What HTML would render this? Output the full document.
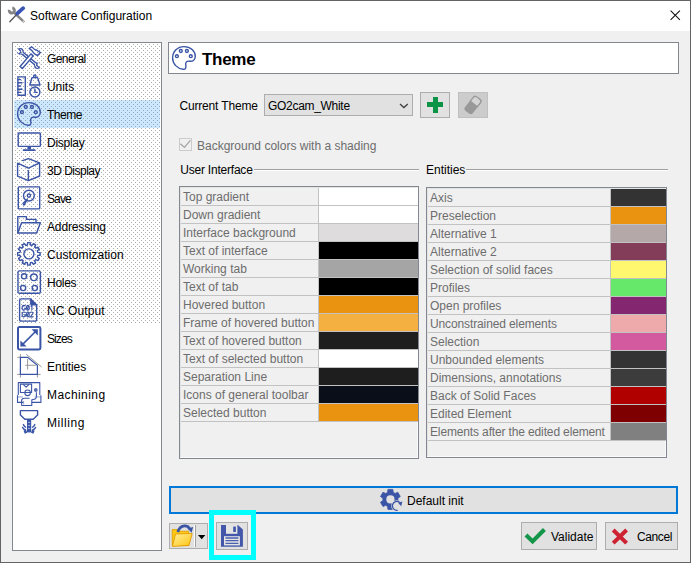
<!DOCTYPE html>
<html><head><meta charset="utf-8">
<style>
*{box-sizing:border-box;margin:0;padding:0}
html,body{width:691px;height:563px;overflow:hidden;background:#f0f0f0}
body{position:relative;font-family:"Liberation Sans",sans-serif;font-size:12px;color:#000}
.a{position:absolute}
.t{position:absolute;white-space:nowrap;line-height:14px;font-size:12px}
.btn{position:absolute;border:1px solid #adadad;background:#e1e1e1}
svg{overflow:visible}
</style></head>
<body>
<div class="a" style="left:0;top:0;width:691px;height:563px;border:1px solid #646464"></div>
<div class="a" style="left:1px;top:1px;width:689px;height:30px;background:#fff"></div>
<svg class="a" style="left:0px;top:0px;" width="32" height="32" viewBox="0 0 32 32">
<path d="M12.3 7.9 A2.6 2.6 0 1 1 9.3 9.9" stroke="#858585" stroke-width="2.9" fill="none"/>
<path d="M13.8 12.4 L23.4 21.4" stroke="#858585" stroke-width="2.6" stroke-linecap="round"/>
<circle cx="23.2" cy="21.2" r="0.7" fill="#fff"/>
<path d="M16.4 14.8 L9.8 21.8" stroke="#555" stroke-width="1.3" stroke-linecap="round"/>
<path d="M17.4 13.4 L23.2 8.2" stroke="#3b55b5" stroke-width="3.8" stroke-linecap="round"/>
</svg>
<div class="t" style="left:30px;top:9px;color:#000;font-size:12px;line-height:14px;font-weight:normal;">Software Configuration</div>
<svg class="a" style="left:670px;top:10px;" width="11" height="11" viewBox="0 0 11 11"><path d="M0.6 0.6 L9.9 9.9 M9.9 0.6 L0.6 9.9" stroke="#111" stroke-width="1.05"/></svg>
<div class="a" style="left:12px;top:42px;width:150px;height:509px;border:1px solid #828790;background:#fff"></div>
<div class="a" style="left:14px;top:100px;width:146px;height:28px;background:#cce8ff"></div>
<svg class="a" style="left:0;top:0" width="691" height="563"><defs>
<pattern id="dw" patternUnits="userSpaceOnUse" width="4" height="4" x="0" y="0">
<rect x="1" y="0" width="1" height="1" fill="#adadad"/><rect x="3" y="2" width="1" height="1" fill="#adadad"/></pattern>
<pattern id="db" patternUnits="userSpaceOnUse" width="4" height="4" x="0" y="0">
<rect x="1" y="0" width="1" height="1" fill="#98a8b8"/><rect x="3" y="2" width="1" height="1" fill="#98a8b8"/></pattern>
</defs>
<rect x="14" y="44" width="146" height="56" fill="url(#dw)" shape-rendering="crispEdges"/>
<rect x="14" y="100" width="146" height="28" fill="url(#db)" shape-rendering="crispEdges"/>
<rect x="14" y="128" width="146" height="195" fill="url(#dw)" shape-rendering="crispEdges"/>
</svg>
<svg class="a" style="left:17px;top:46px;" width="24" height="24" viewBox="0 0 24 24">
<defs>
<filter id="ol" x="-20%" y="-20%" width="140%" height="140%"><feMorphology in="SourceAlpha" operator="erode" radius="1.25" result="e"/><feComposite in="SourceGraphic" in2="e" operator="out"/></filter>
<mask id="wm" maskUnits="userSpaceOnUse" x="-2" y="-2" width="28" height="28"><rect x="-2" y="-2" width="28" height="28" fill="#fff"/>
<path d="M-1 1.2 L3.4 5.4 L1.6 7.4 L-2.6 3 Z" fill="#000"/>
<path d="M25 23.4 L19.8 18.4 L21.8 16.6 L26.6 21.4 Z" fill="#000"/>
</mask>
</defs>
<g filter="url(#ol)"><g mask="url(#wm)" fill="#3b55a6">
<path d="M3.6 5.6 L20.2 19.4" stroke="#3b55a6" stroke-width="3.6"/>
<circle cx="3.2" cy="5.2" r="3.3"/>
<circle cx="20.4" cy="19.8" r="3.3"/>
</g></g>
<path d="M3.1 20.5 L13.9 7.9 L16.2 9.9 L5.4 22.5 Z" fill="#fff" stroke="#3b55a6" fill="none" stroke-width="1.4" stroke-linejoin="round" stroke-linecap="round" stroke-width="1.3"/>
<path d="M12.2 2.6 L14.6 0.8 Q16 1.4 16.6 2.6 Q17.6 3.8 19.4 4 L23.4 6.6 L20.6 9.6 L17.6 7.8 Q16 6.6 15.6 5.4 Q14.6 3.8 12.2 2.6 Z" stroke="#3b55a6" fill="none" stroke-width="1.4" stroke-linejoin="round" stroke-linecap="round" stroke-width="1.3"/>
</svg>
<div class="t" style="left:47px;top:52px;color:#000;font-size:12px;line-height:14px;font-weight:normal;letter-spacing:-0.57px">General</div>
<svg class="a" style="left:17px;top:74px;" width="24" height="24" viewBox="0 0 24 24">
<rect x="0.9" y="2.9" width="7.4" height="18.4" stroke="#3b55a6" fill="none" stroke-width="1.4" stroke-linejoin="round" stroke-linecap="round"/>
<path d="M1 5.6 H3.6 M1 8.8 H5 M1 12 H3.6 M1 15.2 H5 M1 18.4 H3.6" stroke="#3b55a6" fill="none" stroke-width="1.4" stroke-linejoin="round" stroke-linecap="round"/>
<circle cx="17.8" cy="2.2" r="1.2" stroke="#3b55a6" fill="none" stroke-width="1.4" stroke-linejoin="round" stroke-linecap="round"/>
<path d="M15 3.6 H20.6 L23 11 H12.8 Z" stroke="#3b55a6" fill="none" stroke-width="1.4" stroke-linejoin="round" stroke-linecap="round"/>
<circle cx="17.9" cy="18" r="5" stroke="#3b55a6" fill="none" stroke-width="1.4" stroke-linejoin="round" stroke-linecap="round"/>
<path d="M17.9 15 V18.4 H20" stroke="#3b55a6" fill="none" stroke-width="1.4" stroke-linejoin="round" stroke-linecap="round"/>
</svg>
<div class="t" style="left:47px;top:80px;color:#000;font-size:12px;line-height:14px;font-weight:normal;letter-spacing:-0.05px">Units</div>
<svg class="a" style="left:17px;top:102px;" width="24" height="24" viewBox="0 0 24 24">
<path d="M12 0.6 C18.6 0.6 23.4 5 23.3 10.6 C23.2 14.4 20.4 15.6 17.4 15.2 C14.4 14.8 13.2 16.8 13.8 19.4 C14.4 22.4 13.2 23.6 11.2 23.3 C5.2 22.6 0.6 18 0.6 12 C0.6 5.4 5.6 0.6 12 0.6 Z" stroke="#3b55a6" fill="none" stroke-width="1.4" stroke-linejoin="round" stroke-linecap="round" stroke-width="1.25"/>
<circle cx="8.8" cy="5" r="1.45" stroke="#3b55a6" fill="none" stroke-width="1.4" stroke-linejoin="round" stroke-linecap="round" stroke-width="1.1"/>
<circle cx="14.9" cy="5" r="1.45" stroke="#3b55a6" fill="none" stroke-width="1.4" stroke-linejoin="round" stroke-linecap="round" stroke-width="1.1"/>
<circle cx="4.9" cy="10.2" r="1.45" stroke="#3b55a6" fill="none" stroke-width="1.4" stroke-linejoin="round" stroke-linecap="round" stroke-width="1.1"/>
<circle cx="18.8" cy="10.2" r="1.45" stroke="#3b55a6" fill="none" stroke-width="1.4" stroke-linejoin="round" stroke-linecap="round" stroke-width="1.1"/>
</svg>
<div class="t" style="left:47px;top:108px;color:#000;font-size:12px;line-height:14px;font-weight:normal;letter-spacing:-0.47px">Theme</div>
<svg class="a" style="left:17px;top:130px;" width="24" height="24" viewBox="0 0 24 24">
<rect x="1.2" y="3" width="22.2" height="13.4" rx="0.8" stroke="#3b55a6" fill="none" stroke-width="1.4" stroke-linejoin="round" stroke-linecap="round" stroke-width="1.7"/>
<rect x="10.4" y="16.4" width="3.6" height="3" fill="#3b55a6"/>
<path d="M6.6 20.2 H17.6" stroke="#3b55a6" stroke-width="1.8" stroke-linecap="round"/>
</svg>
<div class="t" style="left:47px;top:136px;color:#000;font-size:12px;line-height:14px;font-weight:normal;letter-spacing:-0.27px">Display</div>
<svg class="a" style="left:17px;top:158px;" width="24" height="24" viewBox="0 0 24 24">
<path d="M5.6 2.6 L11.4 0.6 L22.6 4.9 L11.4 10.2 L0.6 5.2 V18.2 L11.4 22.6 L22.6 18 V4.9" stroke="#3b55a6" fill="none" stroke-width="1.4" stroke-linejoin="round" stroke-linecap="round" stroke-width="1.6"/>
<path d="M11.4 12.6 V22.4" stroke="#3b55a6" fill="none" stroke-width="1.4" stroke-linejoin="round" stroke-linecap="round" stroke-width="1.6"/>
</svg>
<div class="t" style="left:47px;top:164px;color:#000;font-size:12px;line-height:14px;font-weight:normal;letter-spacing:-0.5px">3D Display</div>
<svg class="a" style="left:17px;top:186px;" width="24" height="24" viewBox="0 0 24 24">
<rect x="1.3" y="0.9" width="21.4" height="22" rx="0.8" stroke="#3b55a6" fill="none" stroke-width="1.4" stroke-linejoin="round" stroke-linecap="round" stroke-width="1.5"/>
<circle cx="11.9" cy="9.6" r="5.4" stroke="#3b55a6" fill="none" stroke-width="1.4" stroke-linejoin="round" stroke-linecap="round"/>
<circle cx="11.9" cy="9.6" r="1.6" stroke="#3b55a6" fill="none" stroke-width="1.4" stroke-linejoin="round" stroke-linecap="round"/>
<path d="M10.2 13.2 L6 17.6 L7 19.2 L9.4 15 Z" stroke="#3b55a6" fill="none" stroke-width="1.4" stroke-linejoin="round" stroke-linecap="round"/>
</svg>
<div class="t" style="left:47px;top:192px;color:#000;font-size:12px;line-height:14px;font-weight:normal;letter-spacing:-0.9px">Save</div>
<svg class="a" style="left:17px;top:214px;" width="24" height="24" viewBox="0 0 24 24">
<path d="M0.8 19 V2.6 H9.4 V5.4 H19 V8.8" stroke="#3b55a6" fill="none" stroke-width="1.4" stroke-linejoin="round" stroke-linecap="round" stroke-width="1.6"/>
<path d="M4.6 8.8 H23.4 L19.6 19 H0.8 Z" stroke="#3b55a6" fill="none" stroke-width="1.4" stroke-linejoin="round" stroke-linecap="round" stroke-width="1.6"/>
</svg>
<div class="t" style="left:47px;top:220px;color:#000;font-size:12px;line-height:14px;font-weight:normal;letter-spacing:-0.13px">Addressing</div>
<svg class="a" style="left:17px;top:242px;" width="24" height="24" viewBox="0 0 24 24">
<path d="M20.77 10.40 L23.13 10.60 L23.13 13.20 L20.77 13.40 L20.34 15.04 L22.27 16.39 L20.97 18.64 L18.83 17.64 L17.64 18.83 L18.64 20.97 L16.39 22.27 L15.04 20.34 L13.40 20.77 L13.20 23.13 L10.60 23.13 L10.40 20.77 L8.76 20.34 L7.41 22.27 L5.16 20.97 L6.16 18.83 L4.97 17.64 L2.83 18.64 L1.53 16.39 L3.46 15.04 L3.03 13.40 L0.67 13.20 L0.67 10.60 L3.03 10.40 L3.46 8.76 L1.53 7.41 L2.83 5.16 L4.97 6.16 L6.16 4.97 L5.16 2.83 L7.41 1.53 L8.76 3.46 L10.40 3.03 L10.60 0.67 L13.20 0.67 L13.40 3.03 L15.04 3.46 L16.39 1.53 L18.64 2.83 L17.64 4.97 L18.83 6.16 L20.97 5.16 L22.27 7.41 L20.34 8.76 Z" stroke="#3b55a6" fill="none" stroke-width="1.4" stroke-linejoin="round" stroke-linecap="round" stroke-width="1.5"/>
<circle cx="11.9" cy="11.9" r="5" stroke="#3b55a6" fill="none" stroke-width="1.4" stroke-linejoin="round" stroke-linecap="round" stroke-width="1.5"/>
</svg>
<div class="t" style="left:47px;top:248px;color:#000;font-size:12px;line-height:14px;font-weight:normal;letter-spacing:0.05px">Customization</div>
<svg class="a" style="left:17px;top:270px;" width="24" height="24" viewBox="0 0 24 24">
<rect x="1" y="0.9" width="22.4" height="22.4" rx="1.6" stroke="#3b55a6" fill="none" stroke-width="1.4" stroke-linejoin="round" stroke-linecap="round" stroke-width="1.6"/>
<circle cx="7.1" cy="6.3" r="2.6" stroke="#3b55a6" fill="none" stroke-width="1.4" stroke-linejoin="round" stroke-linecap="round" stroke-width="1.5"/>
<circle cx="16.9" cy="7.3" r="3.3" stroke="#3b55a6" fill="none" stroke-width="1.4" stroke-linejoin="round" stroke-linecap="round" stroke-width="1.5"/>
<circle cx="6.1" cy="18" r="2.6" stroke="#3b55a6" fill="none" stroke-width="1.4" stroke-linejoin="round" stroke-linecap="round" stroke-width="1.5"/>
<circle cx="17.8" cy="18" r="2.6" stroke="#3b55a6" fill="none" stroke-width="1.4" stroke-linejoin="round" stroke-linecap="round" stroke-width="1.5"/>
</svg>
<div class="t" style="left:47px;top:276px;color:#000;font-size:12px;line-height:14px;font-weight:normal;letter-spacing:-0.28px">Holes</div>
<svg class="a" style="left:17px;top:298px;" width="24" height="24" viewBox="0 0 24 24">
<path d="M13.6 0.9 H4.4 Q2.6 0.9 2.6 2.8 V21.2 Q2.6 23.1 4.4 23.1 H17.8 Q19.7 23.1 19.7 21.2 V7 Z" stroke="#3b55a6" fill="none" stroke-width="1.4" stroke-linejoin="round" stroke-linecap="round"/>
<path d="M13.6 0.9 V6 Q13.6 7 14.6 7 H19.7 Z" fill="#3b55a6" stroke="#3b55a6" stroke-width="1" stroke-linejoin="round"/>
<g stroke="#3b55a6" stroke-width="1.15" fill="none">
<path d="M8.5 8.3 Q8 7.3 6.9 7.3 Q5.1 7.3 5.1 9.7 Q5.1 12.1 6.9 12.1 Q8.5 12.1 8.5 10.2 H7"/>
<ellipse cx="10.9" cy="9.7" rx="1.35" ry="2.3"/><path d="M10 11.4 L11.8 8"/>
<path d="M13.6 8.4 L14.9 7.3 V12.1"/>
<path d="M8.5 15 Q8 14 6.9 14 Q5.1 14 5.1 16.4 Q5.1 18.8 6.9 18.8 Q8.5 18.8 8.5 16.9 H7"/>
<ellipse cx="10.9" cy="16.4" rx="1.35" ry="2.3"/><path d="M10 18.1 L11.8 14.7"/>
<path d="M13.3 15 Q13.6 14 14.7 14 Q16 14 16 15.3 Q16 16.3 13.3 18.8 H16.3"/>
</g>
</svg>
<div class="t" style="left:47px;top:304px;color:#000;font-size:12px;line-height:14px;font-weight:normal;letter-spacing:0.12px">NC Output</div>
<svg class="a" style="left:17px;top:326px;" width="24" height="24" viewBox="0 0 24 24">
<rect x="1" y="1" width="22.4" height="22.4" rx="1.4" stroke="#3b55a6" fill="none" stroke-width="2"/>
<path d="M5.4 18.6 L18.8 5.2" stroke="#3b55a6" stroke-width="1.6"/>
<path d="M3.4 14.4 V20.6 H9.6 Z" fill="#3b55a6"/>
<path d="M20.8 9.4 V3.2 H14.6 Z" fill="#3b55a6"/>
</svg>
<div class="t" style="left:47px;top:332px;color:#000;font-size:12px;line-height:14px;font-weight:normal;letter-spacing:-0.9px">Sizes</div>
<svg class="a" style="left:17px;top:354px;" width="24" height="24" viewBox="0 0 24 24">
<path d="M0.2 3.3 H3.4 M3.4 0.1 V3.3 M0.2 20.4 H3.4 M3.4 20.4 V23.6 M20.4 20.4 H23.6 M20.4 20.4 V23.6 M9.2 0.2 L24.6 13 M10.6 5 V15.6 M8.2 11.3 H18.8" stroke="#9a9a9a" stroke-width="1" fill="none"/>
<path d="M3.4 3.3 H10.6 L20.4 11.2 V20.4 H3.4 Z" stroke="#3b55a6" stroke-width="1.25" fill="none"/>
</svg>
<div class="t" style="left:47px;top:360px;color:#000;font-size:12px;line-height:14px;font-weight:normal;letter-spacing:-0.01px">Entities</div>
<svg class="a" style="left:17px;top:382px;" width="24" height="24" viewBox="0 0 24 24">
<g stroke="#3b55a6" fill="none" stroke-width="1.1" stroke-linejoin="round">
<path d="M1.3 13 V0.6 H22.8 V13"/>
<rect x="3.4" y="2.1" width="11.2" height="8.4"/>
<path d="M6.2 2.3 L9.1 5.1 L12 2.3"/>
<path d="M0.5 13.2 V20.4 H6.4 M14.8 20.4 H23.9 V13.2"/>
<path d="M0.9 14.9 H6 M17.6 14.9 H23.5" stroke-opacity="0.45" stroke-width="1.3"/>
<circle cx="10.6" cy="10.8" r="2.8" fill="#fff"/>
<path d="M7.8 10.5 H13.4"/>
<path d="M4.6 23.5 H14.8 V17.8 L17.4 17.2 Q19.4 16.8 19.4 14.6 V10.2"/>
<path d="M4.6 23.5 V18.8 Q4.6 16.2 7.6 16.2 H12.6"/>
<path d="M6.6 19 V22.6" stroke-opacity="0.45"/>
</g>
<circle cx="18.8" cy="8" r="1.9" fill="#3b55a6" fill-opacity="0.85"/>
</svg>
<div class="t" style="left:47px;top:388px;color:#000;font-size:12px;line-height:14px;font-weight:normal;letter-spacing:0.42px">Machining</div>
<svg class="a" style="left:17px;top:410px;" width="24" height="24" viewBox="0 0 24 24">
<path d="M3.4 0.6 H20.6 V4.9 L16.2 9.2 H7.8 L3.4 4.9 Z" stroke="#3b55a6" fill="none" stroke-width="1.4" stroke-linejoin="round" stroke-linecap="round" stroke-width="1.6"/>
<rect x="10" y="9.2" width="4.2" height="13.2" fill="#3b55a6"/>
<path d="M11 12.4 H13.2 M11 15.4 H13.2 M11 18.4 H13.2" stroke="#c8d0ea" stroke-width="0.8"/>
<path d="M6.4 14.6 Q7.4 16.6 8.6 17.2 M5.6 17.4 Q6.6 19.6 8.4 19.8 Q9 21.4 9.4 22.4 M7.4 21 L8.2 23" stroke="#3b55a6" fill="none" stroke-width="1.4" stroke-linejoin="round" stroke-linecap="round" stroke-width="1.1"/>
<path d="M17.8 14.6 Q16.8 16.6 15.6 17.2 M18.6 17.4 Q17.6 19.6 15.8 19.8 Q15.2 21.4 14.8 22.4 M16.8 21 L16 23" stroke="#3b55a6" fill="none" stroke-width="1.4" stroke-linejoin="round" stroke-linecap="round" stroke-width="1.1"/>
</svg>
<div class="t" style="left:47px;top:416px;color:#000;font-size:12px;line-height:14px;font-weight:normal;letter-spacing:0.58px">Milling</div>
<div class="a" style="left:168px;top:42px;width:511px;height:32px;border:1px solid #828790;background:#fff"></div>
<svg class="a" style="left:172px;top:46px;" width="24" height="24" viewBox="0 0 24 24">
<path d="M12 0.6 C18.6 0.6 23.4 5 23.3 10.6 C23.2 14.4 20.4 15.6 17.4 15.2 C14.4 14.8 13.2 16.8 13.8 19.4 C14.4 22.4 13.2 23.6 11.2 23.3 C5.2 22.6 0.6 18 0.6 12 C0.6 5.4 5.6 0.6 12 0.6 Z" stroke="#3b55a6" fill="none" stroke-width="1.4" stroke-linejoin="round" stroke-linecap="round" stroke-width="1.25"/>
<circle cx="8.8" cy="5" r="1.45" stroke="#3b55a6" fill="none" stroke-width="1.4" stroke-linejoin="round" stroke-linecap="round" stroke-width="1.1"/>
<circle cx="14.9" cy="5" r="1.45" stroke="#3b55a6" fill="none" stroke-width="1.4" stroke-linejoin="round" stroke-linecap="round" stroke-width="1.1"/>
<circle cx="4.9" cy="10.2" r="1.45" stroke="#3b55a6" fill="none" stroke-width="1.4" stroke-linejoin="round" stroke-linecap="round" stroke-width="1.1"/>
<circle cx="18.8" cy="10.2" r="1.45" stroke="#3b55a6" fill="none" stroke-width="1.4" stroke-linejoin="round" stroke-linecap="round" stroke-width="1.1"/>
</svg>
<div class="t" style="left:202px;top:50px;color:#000;font-size:17px;line-height:20px;font-weight:bold;letter-spacing:-0.3px">Theme</div>
<div class="t" style="left:179.4px;top:99px;color:#000;font-size:12px;line-height:14px;font-weight:normal;letter-spacing:-0.16px">Current Theme</div>
<div class="a" style="left:264px;top:94px;width:149px;height:22px;border:1px solid #adadad;background:#e1e1e1"></div>
<div class="t" style="left:268px;top:99px;color:#000;font-size:12px;line-height:14px;font-weight:normal;letter-spacing:-0.3px">GO2cam_White</div>
<svg class="a" style="left:399px;top:103px;" width="10" height="6" viewBox="0 0 10 6"><path d="M1 1 L4.9 4.6 L8.8 1" stroke="#404040" stroke-width="1.3" fill="none"/></svg>
<div class="btn" style="left:420px;top:92px;width:30px;height:26px"></div>
<div class="a" style="left:433px;top:97px;width:5px;height:16px;background:#0b9346"></div>
<div class="a" style="left:427px;top:102px;width:16px;height:5px;background:#0b9346"></div>
<div class="btn" style="left:458px;top:92px;width:30px;height:26px;background:#cccccc;border-color:#c0c0c0"></div>
<svg class="a" style="left:458px;top:92px;" width="30" height="26" viewBox="0 0 30 26">
<g transform="rotate(38 15 13)">
<rect x="10" y="3.8" width="10" height="18.4" rx="2.8" fill="#999" />
<path d="M10.6 11.6 V6.6 Q10.6 4.4 12.8 4.4 H17.2 Q19.4 4.4 19.4 6.6 V11.6 Z" fill="#d4d4d4" stroke="#999" stroke-width="1.2"/>
</g></svg>
<div class="a" style="left:179px;top:138px;width:13px;height:13px;border:1px solid #cccccc"></div>
<svg class="a" style="left:179px;top:138px;" width="13" height="13" viewBox="0 0 13 13"><path d="M1.4 5.8 L5.4 9.4 L11.4 2.4" stroke="#a4a4a4" stroke-width="1.3" fill="none"/></svg>
<div class="t" style="left:197px;top:139px;color:#6d6d6d;font-size:12px;line-height:14px;font-weight:normal;">Background colors with a shading</div>
<div class="t" style="left:180.3px;top:163px;color:#000;font-size:12px;line-height:14px;font-weight:normal;letter-spacing:-0.22px">User Interface</div>
<div class="a" style="left:254px;top:169px;width:165px;height:1px;background:#a0a0a0"></div>
<div class="a" style="left:254px;top:170px;width:165px;height:1px;background:#fff"></div>
<div class="t" style="left:426px;top:163px;color:#000;font-size:12px;line-height:14px;font-weight:normal;">Entities</div>
<div class="a" style="left:466px;top:169px;width:202px;height:1px;background:#a0a0a0"></div>
<div class="a" style="left:466px;top:170px;width:202px;height:1px;background:#fff"></div>
<div class="a" style="left:179px;top:186px;width:240px;height:273px;border:1px solid #828790;background:#f0f0f0"></div>
<div class="a" style="left:180px;top:187px;width:238px;height:1px;background:#e3e3e3"></div>
<div class="a" style="left:180px;top:187px;width:1px;height:271px;background:#e3e3e3"></div>
<div class="a" style="left:180px;top:457px;width:238px;height:1px;background:#fafafa"></div>
<div class="a" style="left:417px;top:187px;width:1px;height:271px;background:#fafafa"></div>
<div class="a" style="left:319px;top:188px;width:99px;height:17px;background:#ffffff"></div>
<div class="a" style="left:181px;top:205px;width:237px;height:1px;background:#c2c2c2"></div>
<div class="t" style="left:183px;top:190px;color:#6d6d6d;font-size:12px;line-height:14px;font-weight:normal;">Top gradient</div>
<div class="a" style="left:319px;top:206px;width:99px;height:17px;background:#ffffff"></div>
<div class="a" style="left:181px;top:223px;width:237px;height:1px;background:#c2c2c2"></div>
<div class="t" style="left:183px;top:208px;color:#6d6d6d;font-size:12px;line-height:14px;font-weight:normal;">Down gradient</div>
<div class="a" style="left:319px;top:224px;width:99px;height:17px;background:#dedcdd"></div>
<div class="a" style="left:181px;top:241px;width:237px;height:1px;background:#c2c2c2"></div>
<div class="t" style="left:183px;top:226px;color:#6d6d6d;font-size:12px;line-height:14px;font-weight:normal;">Interface background</div>
<div class="a" style="left:319px;top:242px;width:99px;height:17px;background:#000000"></div>
<div class="a" style="left:181px;top:259px;width:237px;height:1px;background:#c2c2c2"></div>
<div class="t" style="left:183px;top:244px;color:#6d6d6d;font-size:12px;line-height:14px;font-weight:normal;">Text of interface</div>
<div class="a" style="left:319px;top:260px;width:99px;height:17px;background:#a5a5a5"></div>
<div class="a" style="left:181px;top:277px;width:237px;height:1px;background:#c2c2c2"></div>
<div class="t" style="left:183px;top:262px;color:#6d6d6d;font-size:12px;line-height:14px;font-weight:normal;">Working tab</div>
<div class="a" style="left:319px;top:278px;width:99px;height:17px;background:#000000"></div>
<div class="a" style="left:181px;top:295px;width:237px;height:1px;background:#c2c2c2"></div>
<div class="t" style="left:183px;top:280px;color:#6d6d6d;font-size:12px;line-height:14px;font-weight:normal;">Text of tab</div>
<div class="a" style="left:319px;top:296px;width:99px;height:17px;background:#ea9310"></div>
<div class="a" style="left:181px;top:313px;width:237px;height:1px;background:#c2c2c2"></div>
<div class="t" style="left:183px;top:298px;color:#6d6d6d;font-size:12px;line-height:14px;font-weight:normal;">Hovered button</div>
<div class="a" style="left:319px;top:314px;width:99px;height:17px;background:#f4b040"></div>
<div class="a" style="left:181px;top:331px;width:237px;height:1px;background:#c2c2c2"></div>
<div class="t" style="left:183px;top:316px;color:#6d6d6d;font-size:12px;line-height:14px;font-weight:normal;">Frame of hovered button</div>
<div class="a" style="left:319px;top:332px;width:99px;height:17px;background:#1e1e1e"></div>
<div class="a" style="left:181px;top:349px;width:237px;height:1px;background:#c2c2c2"></div>
<div class="t" style="left:183px;top:334px;color:#6d6d6d;font-size:12px;line-height:14px;font-weight:normal;">Text of hovered button</div>
<div class="a" style="left:319px;top:350px;width:99px;height:17px;background:#ffffff"></div>
<div class="a" style="left:181px;top:367px;width:237px;height:1px;background:#c2c2c2"></div>
<div class="t" style="left:183px;top:352px;color:#6d6d6d;font-size:12px;line-height:14px;font-weight:normal;">Text of selected button</div>
<div class="a" style="left:319px;top:368px;width:99px;height:17px;background:#1e1e1e"></div>
<div class="a" style="left:181px;top:385px;width:237px;height:1px;background:#c2c2c2"></div>
<div class="t" style="left:183px;top:370px;color:#6d6d6d;font-size:12px;line-height:14px;font-weight:normal;">Separation Line</div>
<div class="a" style="left:319px;top:386px;width:99px;height:17px;background:#0a0e18"></div>
<div class="a" style="left:181px;top:403px;width:237px;height:1px;background:#c2c2c2"></div>
<div class="t" style="left:183px;top:388px;color:#6d6d6d;font-size:12px;line-height:14px;font-weight:normal;">Icons of general toolbar</div>
<div class="a" style="left:319px;top:404px;width:99px;height:17px;background:#ea9310"></div>
<div class="a" style="left:181px;top:421px;width:237px;height:1px;background:#c2c2c2"></div>
<div class="t" style="left:183px;top:406px;color:#6d6d6d;font-size:12px;line-height:14px;font-weight:normal;">Selected button</div>
<div class="a" style="left:318px;top:188px;width:1px;height:234px;background:#c2c2c2"></div>
<div class="a" style="left:426px;top:187px;width:241px;height:271px;border:1px solid #828790;background:#f0f0f0"></div>
<div class="a" style="left:427px;top:188px;width:239px;height:1px;background:#e3e3e3"></div>
<div class="a" style="left:427px;top:188px;width:1px;height:269px;background:#e3e3e3"></div>
<div class="a" style="left:427px;top:456px;width:239px;height:1px;background:#fafafa"></div>
<div class="a" style="left:665px;top:188px;width:1px;height:269px;background:#fafafa"></div>
<div class="a" style="left:611px;top:189px;width:55px;height:17px;background:#333333"></div>
<div class="a" style="left:428px;top:206px;width:238px;height:1px;background:#c2c2c2"></div>
<div class="t" style="left:430px;top:191px;color:#6d6d6d;font-size:12px;line-height:14px;font-weight:normal;">Axis</div>
<div class="a" style="left:611px;top:207px;width:55px;height:17px;background:#ea9310"></div>
<div class="a" style="left:428px;top:224px;width:238px;height:1px;background:#c2c2c2"></div>
<div class="t" style="left:430px;top:209px;color:#6d6d6d;font-size:12px;line-height:14px;font-weight:normal;">Preselection</div>
<div class="a" style="left:611px;top:225px;width:55px;height:17px;background:#b4a9a8"></div>
<div class="a" style="left:428px;top:242px;width:238px;height:1px;background:#c2c2c2"></div>
<div class="t" style="left:430px;top:227px;color:#6d6d6d;font-size:12px;line-height:14px;font-weight:normal;">Alternative 1</div>
<div class="a" style="left:611px;top:243px;width:55px;height:17px;background:#833d58"></div>
<div class="a" style="left:428px;top:260px;width:238px;height:1px;background:#c2c2c2"></div>
<div class="t" style="left:430px;top:245px;color:#6d6d6d;font-size:12px;line-height:14px;font-weight:normal;">Alternative 2</div>
<div class="a" style="left:611px;top:261px;width:55px;height:17px;background:#fff86e"></div>
<div class="a" style="left:428px;top:278px;width:238px;height:1px;background:#c2c2c2"></div>
<div class="t" style="left:430px;top:263px;color:#6d6d6d;font-size:12px;line-height:14px;font-weight:normal;">Selection of solid faces</div>
<div class="a" style="left:611px;top:279px;width:55px;height:17px;background:#66e86a"></div>
<div class="a" style="left:428px;top:296px;width:238px;height:1px;background:#c2c2c2"></div>
<div class="t" style="left:430px;top:281px;color:#6d6d6d;font-size:12px;line-height:14px;font-weight:normal;">Profiles</div>
<div class="a" style="left:611px;top:297px;width:55px;height:17px;background:#842670"></div>
<div class="a" style="left:428px;top:314px;width:238px;height:1px;background:#c2c2c2"></div>
<div class="t" style="left:430px;top:299px;color:#6d6d6d;font-size:12px;line-height:14px;font-weight:normal;">Open profiles</div>
<div class="a" style="left:611px;top:315px;width:55px;height:17px;background:#eeaaaa"></div>
<div class="a" style="left:428px;top:332px;width:238px;height:1px;background:#c2c2c2"></div>
<div class="t" style="left:430px;top:317px;color:#6d6d6d;font-size:12px;line-height:14px;font-weight:normal;letter-spacing:-0.12px">Unconstrained elements</div>
<div class="a" style="left:611px;top:333px;width:55px;height:17px;background:#d45aa0"></div>
<div class="a" style="left:428px;top:350px;width:238px;height:1px;background:#c2c2c2"></div>
<div class="t" style="left:430px;top:335px;color:#6d6d6d;font-size:12px;line-height:14px;font-weight:normal;">Selection</div>
<div class="a" style="left:611px;top:351px;width:55px;height:17px;background:#333333"></div>
<div class="a" style="left:428px;top:368px;width:238px;height:1px;background:#c2c2c2"></div>
<div class="t" style="left:430px;top:353px;color:#6d6d6d;font-size:12px;line-height:14px;font-weight:normal;">Unbounded elements</div>
<div class="a" style="left:611px;top:369px;width:55px;height:17px;background:#3c3c3c"></div>
<div class="a" style="left:428px;top:386px;width:238px;height:1px;background:#c2c2c2"></div>
<div class="t" style="left:430px;top:371px;color:#6d6d6d;font-size:12px;line-height:14px;font-weight:normal;">Dimensions, annotations</div>
<div class="a" style="left:611px;top:387px;width:55px;height:17px;background:#b00000"></div>
<div class="a" style="left:428px;top:404px;width:238px;height:1px;background:#c2c2c2"></div>
<div class="t" style="left:430px;top:389px;color:#6d6d6d;font-size:12px;line-height:14px;font-weight:normal;">Back of Solid Faces</div>
<div class="a" style="left:611px;top:405px;width:55px;height:17px;background:#7f0000"></div>
<div class="a" style="left:428px;top:422px;width:238px;height:1px;background:#c2c2c2"></div>
<div class="t" style="left:430px;top:407px;color:#6d6d6d;font-size:12px;line-height:14px;font-weight:normal;">Edited Element</div>
<div class="a" style="left:611px;top:423px;width:55px;height:17px;background:#808080"></div>
<div class="a" style="left:428px;top:440px;width:238px;height:1px;background:#c2c2c2"></div>
<div class="t" style="left:430px;top:425px;color:#6d6d6d;font-size:12px;line-height:14px;font-weight:normal;letter-spacing:-0.14px">Elements after the edited element</div>
<div class="a" style="left:610px;top:189px;width:1px;height:252px;background:#c2c2c2"></div>
<div class="a" style="left:169px;top:486px;width:509px;height:28px;border:2px solid #0078d7;background:#e1e1e1"></div>
<svg class="a" style="left:379px;top:488px;" width="24" height="24" viewBox="0 0 24 24">
<defs><mask id="gm" maskUnits="userSpaceOnUse" x="-2" y="-2" width="28" height="28"><rect x="-2" y="-2" width="28" height="28" fill="#fff"/><circle cx="11.4" cy="11.4" r="4.1" fill="#000"/><circle cx="17.9" cy="17.9" r="5.7" fill="#000"/></mask></defs>
<path d="M8.60 4.33 L8.94 1.40 L13.86 1.40 L14.20 4.33 L16.12 5.44 L18.83 4.27 L21.29 8.53 L18.92 10.29 L18.92 12.51 L21.29 14.27 L18.83 18.53 L16.12 17.36 L14.20 18.47 L13.86 21.40 L8.94 21.40 L8.60 18.47 L6.68 17.36 L3.97 18.53 L1.51 14.27 L3.88 12.51 L3.88 10.29 L1.51 8.53 L3.97 4.27 L6.68 5.44 Z" fill="#3b55a6" stroke="#3b55a6" stroke-width="0.8" stroke-linejoin="round" mask="url(#gm)"/>
<path d="M20.8 14.45 A4.5 4.5 0 1 0 18.68 22.33" stroke="#3b55a6" stroke-width="1.3" fill="none"/>
<path d="M19 14.8 L23.4 13.6 L22.2 18.2 Z" fill="#3b55a6"/>
</svg>
<div class="t" style="left:407px;top:494px;color:#000;font-size:12px;line-height:14px;font-weight:normal;">Default init</div>
<div class="btn" style="left:169px;top:523px;width:39px;height:26px"></div>
<div class="a" style="left:194px;top:525px;width:1px;height:22px;background:#fff"></div>
<div class="a" style="left:195px;top:525px;width:1px;height:22px;background:#a0a0a0"></div>
<svg class="a" style="left:198px;top:535px;" width="8" height="5" viewBox="0 0 8 5"><path d="M0 0 H7.4 L3.7 4.2 Z" fill="#000"/></svg>
<svg class="a" style="left:171px;top:524px;" width="24" height="24" viewBox="0 0 24 24">
<defs><linearGradient id="fy" x1="0" y1="0" x2="1" y2="1"><stop offset="0" stop-color="#fff2a0"/><stop offset="1" stop-color="#ffc20e"/></linearGradient></defs>
<path d="M1.2 5.6 H6.4 L7.8 7.2 H17.6 V21.6 H1.2 Z" fill="#ffc814" stroke="#e0a000" stroke-width="0.9"/>
<path d="M4.6 10 L21.2 9.4 L18 21.4 L1.4 22.4 Z" fill="url(#fy)" stroke="#e39b00" stroke-width="0.9" stroke-linejoin="round"/>
<path d="M6.8 8.2 Q8.4 2.2 13.6 1.9 Q17 1.8 18.6 4.6" stroke="#3b55a6" stroke-width="2.7" fill="none"/>
<path d="M16.4 4.4 L22.2 3 L20.6 8.8 Z" fill="#3b55a6"/>
</svg>
<div class="btn" style="left:216px;top:522px;width:32px;height:28px"></div>
<svg class="a" style="left:221px;top:525px;" width="22" height="22" viewBox="0 0 22 22">
<path d="M0 0 H16.9 L21.9 4.6 V21.8 H0 Z" fill="#4257aa"/>
<rect x="5" y="0" width="11.4" height="8.8" fill="#e4e4e4"/>
<rect x="12.2" y="1.5" width="2.7" height="5.5" rx="0.6" fill="#4257aa"/>
<rect x="3" y="11.2" width="15.9" height="9.2" fill="#e4e4e4"/>
<path d="M4.5 13 H17.4 M4.5 15.7 H17.4 M4.5 18.4 H17.4" stroke="#4a5fb0" stroke-width="1.3"/>
</svg>
<div class="a" style="left:209px;top:510px;width:47px;height:50px;border:5px solid #00ffff"></div>
<div class="btn" style="left:521px;top:522px;width:76px;height:28px"></div>
<svg class="a" style="left:524px;top:527px;" width="22" height="18" viewBox="0 0 22 18"><path d="M2 8 L8.6 14.4 L20.4 2.6" stroke="#14964a" stroke-width="4.2" fill="none"/></svg>
<div class="t" style="left:551px;top:530px;color:#000;font-size:12px;line-height:14px;font-weight:normal;">Validate</div>
<div class="btn" style="left:605px;top:522px;width:73px;height:28px"></div>
<svg class="a" style="left:611px;top:528px;" width="18" height="17" viewBox="0 0 18 17"><path d="M2.2 2 L15.6 15.2 M15.6 2 L2.2 15.2" stroke="#cd2232" stroke-width="4" fill="none"/></svg>
<div class="t" style="left:637px;top:530px;color:#000;font-size:12px;line-height:14px;font-weight:normal;letter-spacing:-0.4px">Cancel</div>
</body></html>
